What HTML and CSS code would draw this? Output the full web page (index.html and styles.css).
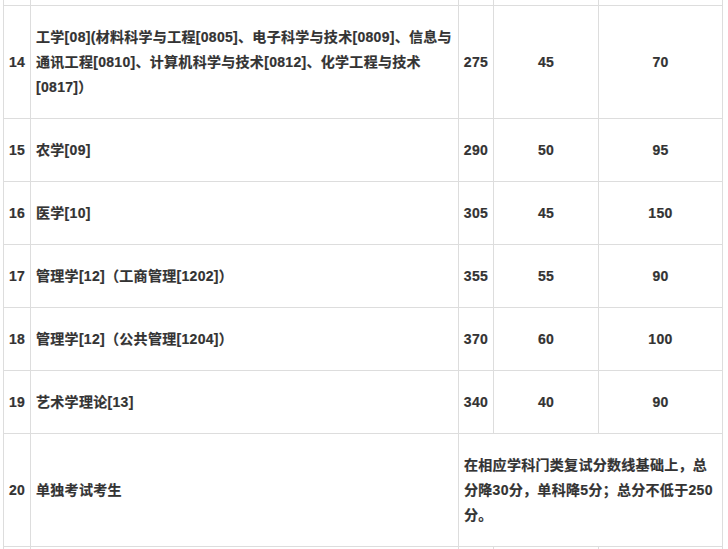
FILE: index.html
```html
<!DOCTYPE html>
<html lang="zh-CN">
<head>
<meta charset="utf-8">
<title>复试分数线</title>
<link rel="stylesheet" href="styles.css">
</head>
<body>
<table class="score-table">
  <colgroup>
    <col class="c-no"><col class="c-name"><col class="c-total"><col class="c-s1"><col class="c-s2">
  </colgroup>
  <tbody>
    <tr class="row-cut-top"><td></td><td></td><td></td><td></td><td></td></tr>
    <tr class="row-tall">
      <td class="no">14</td>
      <td class="name">工学[08](材料科学与工程[0805]、电子科学与技术[0809]、信息与通讯工程[0810]、计算机科学与技术[0812]、化学工程与技术[0817]）</td>
      <td class="num">275</td><td class="num">45</td><td class="num">70</td>
    </tr>
    <tr class="row">
      <td class="no">15</td><td class="name">农学[09]</td>
      <td class="num">290</td><td class="num">50</td><td class="num">95</td>
    </tr>
    <tr class="row">
      <td class="no">16</td><td class="name">医学[10]</td>
      <td class="num">305</td><td class="num">45</td><td class="num">150</td>
    </tr>
    <tr class="row">
      <td class="no">17</td><td class="name">管理学[12]（工商管理[1202]）</td>
      <td class="num">355</td><td class="num">55</td><td class="num">90</td>
    </tr>
    <tr class="row">
      <td class="no">18</td><td class="name">管理学[12]（公共管理[1204]）</td>
      <td class="num">370</td><td class="num">60</td><td class="num">100</td>
    </tr>
    <tr class="row">
      <td class="no">19</td><td class="name">艺术学理论[13]</td>
      <td class="num">340</td><td class="num">40</td><td class="num">90</td>
    </tr>
    <tr class="row-tall">
      <td class="no">20</td><td class="name">单独考试考生</td>
      <td class="note" colspan="3">在相应学科门类复试分数线基础上，总分降30分，单科降5分；总分不低于250分。</td>
    </tr>
    <tr class="row-cut-bottom"><td></td><td></td><td></td><td></td><td></td></tr>
  </tbody>
</table>
</body>
</html>
```

FILE: styles.css
```css
html, body {
  margin: 0;
  padding: 0;
  background: #ffffff;
}

body {
  overflow: hidden;
}

.score-table {
  margin: -1px 0 0 3px;
  width: 720px;
  table-layout: fixed;
  border-collapse: separate;
  border-spacing: 1px;
  background: #dddddd;
  font-family: "Liberation Sans", "Noto Sans CJK SC", sans-serif;
  font-size: 14px;
  font-weight: bold;
  line-height: 25px;
  letter-spacing: 0.3px;
  color: #333333;
  text-spacing-trim: space-all;
  -webkit-text-stroke: 0.2px #333333;
}

.c-no { width: 26px; }
.c-name { width: 427px; }
.c-total { width: 34px; }
.c-s1 { width: 104px; }
.c-s2 { width: 123px; }

.score-table td {
  background: #ffffff;
  padding: 0 5px;
  vertical-align: middle;
  box-sizing: border-box;
}

.row-cut-top td { height: 5px; padding: 0; }
.row td { height: 62px; }
.row-tall td { height: 112px; }
.row-cut-bottom td { height: 20px; padding: 0; }

.no {
  text-align: center;
  padding: 0 !important;
}

.name { text-align: left; }

.num {
  text-align: center;
  padding: 0 !important;
}

.note {
  text-align: left;
  padding: 0 6px 0 5px !important;
}
```
